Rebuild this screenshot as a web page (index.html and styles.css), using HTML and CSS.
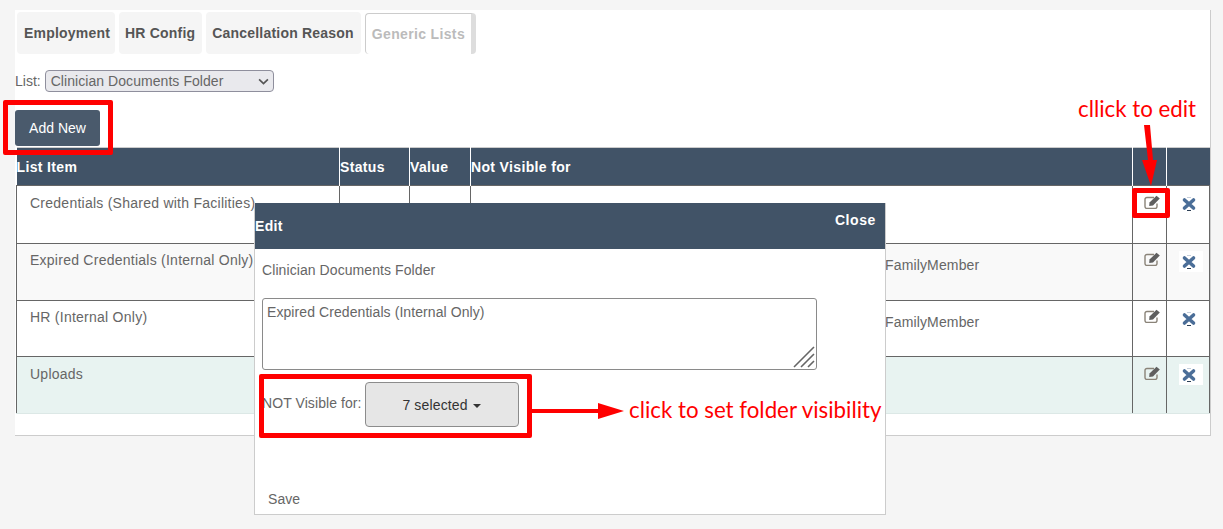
FILE: index.html
```html
<!DOCTYPE html>
<html lang="en">
<head>
  <meta charset="UTF-8">
  <title>Generic Lists</title>
  <link rel="stylesheet" href="styles.css">
</head>
<body>

  <div class="panel">
    <ul class="tabs">
      <li class="tab tab-first">Employment</li>
      <li class="tab">HR Config</li>
      <li class="tab">Cancellation Reason</li>
      <li class="tab tab-active">Generic Lists</li>
    </ul>

    <div class="list-picker">
      <label for="list-select">List:</label>
      <div class="select-wrap">
        <select id="list-select" class="list-select">
          <option>Clinician Documents Folder</option>
        </select>
        <svg class="chevron" viewBox="0 0 10 6"><path d="M1 1 5 5 9 1"/></svg>
      </div>
    </div>

    <button type="button" class="btn-add">Add New</button>

    <table class="items">
      <colgroup>
        <col class="col-item">
        <col class="col-status">
        <col class="col-value">
        <col class="col-hidden">
        <col class="col-edit">
        <col class="col-delete">
      </colgroup>
      <thead>
        <tr>
          <th>List Item</th>
          <th>Status</th>
          <th>Value</th>
          <th>Not Visible for</th>
          <th></th>
          <th></th>
        </tr>
      </thead>
      <tbody>
        <tr class="row-tall">
          <td class="name">Credentials (Shared with Facilities)</td>
          <td></td>
          <td></td>
          <td class="hidden-for"></td>
          <td class="action-edit"><svg class="icon-edit" viewBox="0 0 17 14"><use href="#edit"/></svg></td>
          <td class="action-delete"><span class="icon-bg"><svg class="icon-delete" viewBox="0 0 16 14"><use href="#delete"/></svg></span></td>
        </tr>
        <tr class="row-alt">
          <td class="name">Expired Credentials (Internal Only)</td>
          <td></td>
          <td></td>
          <td class="hidden-for">FamilyMember</td>
          <td class="action-edit"><svg class="icon-edit" viewBox="0 0 17 14"><use href="#edit"/></svg></td>
          <td class="action-delete"><span class="icon-bg icon-bg-white"><svg class="icon-delete" viewBox="0 0 16 14"><use href="#delete"/></svg></span></td>
        </tr>
        <tr class="row-short">
          <td class="name">HR (Internal Only)</td>
          <td></td>
          <td></td>
          <td class="hidden-for">FamilyMember</td>
          <td class="action-edit"><svg class="icon-edit" viewBox="0 0 17 14"><use href="#edit"/></svg></td>
          <td class="action-delete"><span class="icon-bg"><svg class="icon-delete" viewBox="0 0 16 14"><use href="#delete"/></svg></span></td>
        </tr>
        <tr class="row-current">
          <td class="name">Uploads</td>
          <td></td>
          <td></td>
          <td class="hidden-for"></td>
          <td class="action-edit"><svg class="icon-edit" viewBox="0 0 17 14"><use href="#edit"/></svg></td>
          <td class="action-delete"><span class="icon-bg icon-bg-white"><svg class="icon-delete" viewBox="0 0 16 14"><use href="#delete"/></svg></span></td>
        </tr>
      </tbody>
    </table>
  </div>

  <div class="modal">
    <div class="modal-head">
      <span class="modal-title">Edit</span>
      <span class="modal-close">Close</span>
    </div>
    <div class="modal-body">
      <p class="modal-list">Clinician Documents Folder</p>
      <div class="text-wrap">
        <textarea class="modal-text">Expired Credentials (Internal Only)</textarea>
        <svg class="grip" viewBox="0 0 22 22">
          <path d="M1 21 21 1M8 21 21 8M15 21 21 15"/>
        </svg>
      </div>
      <div class="visible-row">
        <span class="visible-label">NOT Visible for:</span>
        <button type="button" class="btn-select">7 selected <i class="caret"></i></button>
      </div>
      <div class="modal-save">Save</div>
    </div>
  </div>

  <!-- red notes drawn on top of the screenshot -->
  <div class="mark mark-add"></div>
  <div class="mark mark-edit"></div>
  <div class="mark mark-visible"></div>
  <div class="note note-edit">cllick to edit</div>
  <div class="note note-visible">click to set folder visibility</div>
  <svg class="arrow arrow-edit" viewBox="0 0 20 70">
    <path d="M3 1 9 1 12 36 16 36 10 62 1 36 7 36Z"/>
  </svg>
  <svg class="arrow arrow-visible" viewBox="0 0 94 16">
    <path d="M0 6H68V0L94 8 68 16V10H0Z"/>
  </svg>

  <svg class="defs" width="0" height="0">
    <defs>
      <g id="edit">
        <path d="M13 8.5V11.5A2 2 0 0 1 11 13.5H3A2 2 0 0 1 1 11.5V4.5A2 2 0 0 1 3 2.5H10" fill="none" stroke="#8a8378" stroke-width="1.4"/>
        <path d="M5.5 7.5 12.5 0.8 15.8 3.6 9 10.5 5.2 11Z" fill="#5f5f5f"/>
      </g>
      <g id="delete">
        <path d="M3.5 3 12.5 11M12.5 3 3.5 11" fill="none" stroke="#4b6e98" stroke-width="3.6" stroke-linecap="round"/>
        <path d="M6 13.5H10" stroke="#2d3f55" stroke-width="1"/>
        <path d="M6 0.5H10" stroke="#c4cedb" stroke-width="1"/>
      </g>
    </defs>
  </svg>

</body>
</html>
```

FILE: styles.css
```css
* {
  margin: 0;
  padding: 0;
  box-sizing: border-box;
}

body {
  font-family: "Liberation Sans", Arial, sans-serif;
  font-size: 14px;
  background-color: #f5f5f5;
  color: #666;
  height: 529px;
  overflow: hidden;
  position: relative;
}

.panel {
  margin: 10px 12px 0 15px;
  height: 426px;
  background-color: #fff;
  border-right: 1px solid #ccc;
  border-bottom: 1px solid #ccc;
}

.tabs {
  list-style: none;
  display: flex;
  gap: 4px;
  padding: 2px 0 0 2px;
  height: 44px;
}

.tab {
  padding: 0 7px 0 6px;
  line-height: 43px;
  height: 42px;
  background-color: #f5f5f5;
  border-radius: 4px;
  font-weight: bold;
  letter-spacing: 0.2px;
  color: #555;
}

.tab-first {
  padding: 0 5px 0 7px;
}

.tab-active {
  margin-top: 1px;
  height: 41px;
  padding: 0 6px;
  line-height: 41px;
  letter-spacing: 0.35px;
  background-color: #fff;
  color: #bbb;
  border: 1px solid #ccc;
  border-right: 5px solid #ddd;
  border-bottom: none;
}

.list-picker {
  display: flex;
  align-items: center;
  gap: 4px;
  margin-top: 16px;
  height: 22px;
}

.select-wrap {
  position: relative;
  width: 229px;
  height: 22px;
}

.list-select {
  appearance: none;
  display: block;
  width: 229px;
  height: 22px;
  padding-left: 5px;
  font-family: inherit;
  font-size: 14px;
  letter-spacing: 0.06px;
  color: #666;
  background-color: #e9e9ed;
  border: 1px solid #8f8f9d;
  border-radius: 4px;
}

.chevron {
  position: absolute;
  right: 5px;
  top: 8px;
  width: 11px;
  height: 7px;
  fill: none;
  stroke: #555;
  stroke-width: 1.5;
}

.btn-add {
  display: block;
  width: 85px;
  height: 36px;
  margin-top: 18px;
  font-family: inherit;
  font-size: 14px;
  color: #fff;
  background-color: #4a5a6c;
  border: none;
  border-radius: 3px;
}

.items {
  width: 1193px;
  margin: 1px 0 0 1px;
  table-layout: fixed;
  border-collapse: collapse;
  border-top: 1px solid #ccc;
}

.col-item { width: 323px; }
.col-status { width: 70px; }
.col-value { width: 61px; }
.col-hidden { width: 662px; }
.col-edit { width: 34px; }
.col-delete { width: 43px; }

.items th {
  height: 38px;
  padding: 0;
  text-align: left;
  letter-spacing: 0.35px;
  color: #fff;
  background-color: #415367;
  border-left: 1px solid #fff;
}

.items th:first-child {
  border-left: none;
}

.items td {
  height: 57px;
  padding: 9px 0 0;
  vertical-align: top;
  border: 1px solid #666;
}

.items .row-tall td {
  height: 58px;
}

.items .row-short td {
  height: 56px;
}

.items .row-alt td,
.items .row-short td {
  padding-top: 8px;
}

.items tbody tr:last-child td {
  border-bottom: 1px solid #dce8e6;
}

.items td.name {
  padding-left: 13px;
  letter-spacing: 0.25px;
}

.items td.hidden-for {
  padding: 13px 0 0 414px;
  letter-spacing: 0.15px;
}

.row-alt td {
  background-color: #f9f9f9;
}

.row-current td {
  background-color: #e8f3f1;
}

.items td.action-edit {
  padding-left: 6px;
  text-align: center;
}

.items td.action-delete {
  padding: 7px 0 0 5px;
  text-align: center;
}

.icon-edit {
  width: 17px;
  height: 14px;
}

.icon-delete {
  display: block;
  width: 16px;
  height: 14px;
}

.icon-bg {
  display: inline-block;
  width: 24px;
  height: 21px;
  padding: 4px 0 0 2px;
}

.icon-bg-white {
  background-color: #fff;
}

.modal {
  position: absolute;
  left: 254px;
  top: 203px;
  width: 632px;
  height: 312px;
  background-color: #fff;
  border: 1px solid #ccc;
  border-top: none;
}

.modal-head {
  display: flex;
  justify-content: space-between;
  height: 46px;
  padding: 0 9px 0 0;
  color: #fff;
  font-weight: bold;
  letter-spacing: 0.3px;
  background-color: #415367;
}

.modal-title {
  padding-top: 15px;
}

.modal-close {
  padding-top: 9px;
  letter-spacing: 0.6px;
}

.modal-body {
  padding: 13px 0 0 7px;
  letter-spacing: 0.08px;
}

.modal-list {
  height: 36px;
  line-height: 16px;
}

.text-wrap {
  position: relative;
  width: 555px;
  height: 72px;
}

.modal-text {
  display: block;
  width: 555px;
  height: 72px;
  padding: 5px 4px;
  font-family: inherit;
  font-size: 14px;
  letter-spacing: 0.08px;
  color: #666;
  border: 1px solid #8a8a8a;
  border-radius: 3px;
  resize: none;
}

.grip {
  position: absolute;
  right: 2px;
  bottom: 2px;
  width: 22px;
  height: 22px;
  fill: none;
  stroke: #666;
  stroke-width: 1.6;
}

.visible-row {
  display: flex;
  align-items: center;
  gap: 3px;
  height: 45px;
  margin-top: 12px;
}

.visible-label {
  margin-bottom: 3px;
}

.btn-select {
  width: 154px;
  height: 45px;
  font-family: inherit;
  font-size: 14px;
  letter-spacing: 0.15px;
  color: #333;
  background-color: #e6e6e6;
  border: 1px solid #8c8c8c;
  border-radius: 4px;
}

.caret {
  display: inline-block;
  margin-left: 1px;
  vertical-align: middle;
  border-top: 4px solid #333;
  border-left: 4px solid transparent;
  border-right: 4px solid transparent;
}

.modal-save {
  margin: 64px 0 0 6px;
}

.mark {
  position: absolute;
  border: 5px solid #f00;
  border-radius: 2px;
}

.mark-add {
  left: 3px;
  top: 100px;
  width: 110px;
  height: 55px;
}

.mark-edit {
  left: 1132px;
  top: 188px;
  width: 38px;
  height: 30px;
}

.mark-visible {
  left: 259px;
  top: 374px;
  width: 273px;
  height: 64px;
}

.note {
  position: absolute;
  font-family: Lato, "Noto Sans", sans-serif;
  font-size: 22.3px;
  color: #f00;
  white-space: nowrap;
  line-height: 28px;
}

.note-edit {
  left: 1078px;
  top: 95px;
}

.note-visible {
  left: 629px;
  top: 396px;
}

.arrow {
  position: absolute;
  fill: #f00;
}

.arrow-edit {
  left: 1141px;
  top: 124px;
  width: 20px;
  height: 70px;
}

.arrow-visible {
  left: 530px;
  top: 403px;
  width: 94px;
  height: 16px;
}

.defs {
  position: absolute;
}
```
